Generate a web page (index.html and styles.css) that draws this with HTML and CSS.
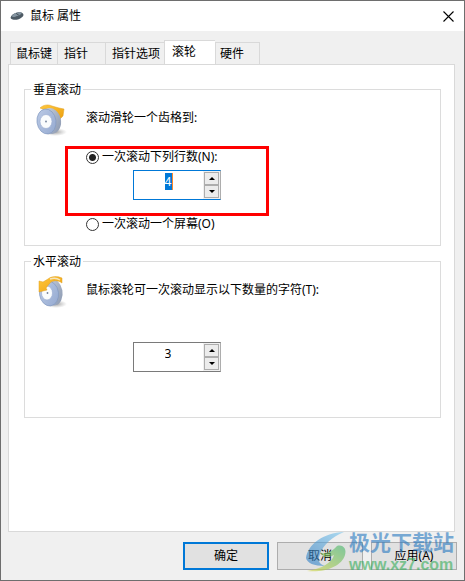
FILE: index.html
```html
<!DOCTYPE html>
<html lang="zh-CN">
<head>
<meta charset="utf-8">
<title>鼠标 属性</title>
<link rel="stylesheet" href="styles.css">
</head>
<body>
<svg class="defs" width="0" height="0" aria-hidden="true">
  <defs>
    <linearGradient id="rim" x1="0" y1="0" x2="1" y2="1"><stop offset="0" stop-color="#bccbe6"/><stop offset="1" stop-color="#94a9d0"/></linearGradient>
    <linearGradient id="tire" x1="0" y1="0" x2="1" y2="1"><stop offset="0" stop-color="#d3dae6"/><stop offset="1" stop-color="#8795ae"/></linearGradient>
    <linearGradient id="gold" x1="0" y1="0" x2="1" y2="1"><stop offset="0" stop-color="#ffc83d"/><stop offset="1" stop-color="#eda010"/></linearGradient>
    <radialGradient id="shade"><stop offset="0" stop-color="#777" stop-opacity=".7"/><stop offset="1" stop-color="#999" stop-opacity="0"/></radialGradient>
    <linearGradient id="sky" x1="0" y1="1" x2="1" y2="0"><stop offset="0" stop-color="#2779c4"/><stop offset="1" stop-color="#7cc8ee"/></linearGradient>
    <linearGradient id="leaf" x1="0" y1="1" x2="1" y2="0"><stop offset="0" stop-color="#d9d640"/><stop offset="1" stop-color="#3db56b"/></linearGradient>
  </defs>
</svg>
<main class="window">
  <header class="titlebar">
    <svg class="mouse" viewBox="0 0 16 10" aria-hidden="true">
      <path d="M1 6C2 3 8 0 13 1c3 1 3 4 1 5-3 3-8 4-11 3C1 8 0 7 1 6z" fill="#4d5a64"/>
      <path d="M2 5c2-3 7-5 11-4 1 1-1 3-5 4-2 1-5 2-6 0z" fill="#8494a0"/>
      <path d="M7 2l3 2" stroke="#354048" stroke-width="1"/>
    </svg>
    <h1>鼠标 属性</h1>
    <button class="close" aria-label="关闭"><svg viewBox="0 0 11 11" aria-hidden="true"><path d="M.5.5l10 10M10.500.5l-10 10" stroke="#000" stroke-width="1.100"/></svg></button>
  </header>
  <div class="body">
    <nav class="tabs" role="tablist">
      <button class="tab first" role="tab">鼠标键</button>
      <button class="tab" role="tab">指针</button>
      <button class="tab wide" role="tab">指针选项</button>
      <button class="tab selected" role="tab" aria-selected="true">滚轮</button>
      <button class="tab last" role="tab">硬件</button>
    </nav>
    <section class="panel" role="tabpanel">
      <section class="group">
        <h2>垂直滚动</h2>
        <svg class="wheel" viewBox="0 0 32 34" aria-hidden="true">
          <ellipse cx="19" cy="28" rx="12" ry="4" fill="url(#shade)"/>
          <path d="M4 4c3-3 8-4 12-2l7 2 5 1-1 7-3 3-7-6z" fill="url(#gold)" stroke="#e1a022" stroke-width=".5"/>
          <ellipse cx="14.500" cy="17" rx="10.500" ry="13" transform="rotate(-12 14.500 17)" fill="url(#tire)"/>
          <ellipse cx="10.500" cy="17.500" rx="9.500" ry="12.500" transform="rotate(-8 10.500 17.500)" fill="url(#rim)" stroke="#8299c0" stroke-width=".7"/>
          <ellipse cx="10" cy="17.500" rx="6" ry="7" fill="#fafcfd" stroke="#9dafd2" stroke-width=".7"/>
          <circle cx="10" cy="17.500" r=".9" fill="#71809a"/>
        </svg>
        <p>滚动滑轮一个齿格到:</p>
        <div class="choices">
          <div class="highlight">
            <label class="choice"><input type="radio" name="scroll" checked>一次滚动下列行数(N):</label>
            <div class="spin active">
              <div class="field"><input class="value" type="text" value="4" aria-label="行数"></div>
              <div class="steps"><button aria-label="增加行数"><i class="up"></i></button><button aria-label="减少行数"><i class="down"></i></button></div>
            </div>
          </div>
          <label class="choice second"><input type="radio" name="scroll">一次滚动一个屏幕(O)</label>
        </div>
      </section>
      <section class="group">
        <h2>水平滚动</h2>
        <svg class="wheel" viewBox="0 0 32 34" aria-hidden="true">
          <ellipse cx="20" cy="28" rx="11" ry="4" fill="url(#shade)"/>
          <ellipse cx="17" cy="16" rx="9.500" ry="13.500" transform="rotate(-10 17 16)" fill="url(#tire)"/>
          <ellipse cx="13" cy="17.500" rx="9.500" ry="12.500" transform="rotate(-8 13 17.500)" fill="url(#rim)" stroke="#8299c0" stroke-width=".7"/>
          <ellipse cx="11" cy="17" rx="5.500" ry="7" fill="#fafcfd" stroke="#9dafd2" stroke-width=".7"/>
          <circle cx="11.500" cy="17" r=".9" fill="#71809a"/>
          <path d="M12 3c4-3 9-3 14-1v5c-4-3-9-3-12 0l-4 5 1 2-8 2V5l4 1z" fill="url(#gold)" stroke="#e1a022" stroke-width=".5"/>
          <path d="M14 3c3-1 7-1 10 1" fill="none" stroke="#f5e5bd" stroke-width="1.500"/>
        </svg>
        <p>鼠标滚轮可一次滚动显示以下数量的字符(T):</p>
        <div class="choices horizontal">
          <div class="spin">
            <div class="field"><input class="value" type="text" value="3" aria-label="字符数"></div>
            <div class="steps"><button aria-label="增加字符数"><i class="up"></i></button><button aria-label="减少字符数"><i class="down"></i></button></div>
          </div>
        </div>
      </section>
    </section>
    <footer class="actions">
      <button class="default">确定</button>
      <button>取消</button>
      <button>应用(A)</button>
      <div class="watermark">
        <svg viewBox="0 0 42 42" aria-hidden="true">
          <path d="M0 26C2 12 17 1 38 0 26 5 17 13 14 22c-3 8 0 10 5 12C8 34 1 31 0 26z" fill="url(#sky)"/>
          <path d="M14 20c4 3 12 0 17-6 6-2 10 3 8 9-3 11-20 18-38 16 14-2 25-8 27-16-5 3-12 3-14-3z" fill="url(#leaf)"/>
        </svg>
        <div><strong>极光下载站</strong><span>www.xz7.com</span></div>
      </div>
    </footer>
  </div>
</main>
</body>
</html>
```
FILE: styles.css
```css
* { box-sizing: border-box; }
body {
  margin: 0;
  background: #fff;
  color: #000;
  font: 12px/16px "Noto Sans", "Noto Sans CJK SC", sans-serif;
}
button, input { font: inherit; color: inherit; margin: 0; padding: 0; }
h1, h2, p { margin: 0; font-size: 12px; font-weight: 400; }
.defs { position: absolute; }
.window {
  display: flex;
  flex-direction: column;
  min-height: 100vh;
  border: 1px solid #6e6e6e;
  background: #f0f0f0;
}
.titlebar {
  display: flex;
  align-items: center;
  height: 30px;
  padding: 0 10px 0 9px;
  background: #fff;
}
.mouse { width: 14px; height: 10px; }
.titlebar h1 { flex: 1; margin-left: 6px; }
.close { width: 11px; height: 11px; border: 0; background: none; }
.close svg { display: block; width: 11px; height: 11px; }
.body {
  display: flex;
  flex: 1;
  flex-direction: column;
  padding: 9px 9px 10px 7px;
}
.tabs {
  display: flex;
  align-items: flex-end;
  height: 25px;
  padding-left: 2px;
  margin-bottom: -1px;
}
.tab {
  width: 48px;
  height: 23px;
  border: 1px solid #d9d9d9;
  border-right: 0;
  background: #f0f0f0;
  text-align: left;
  padding-left: 6px;
  white-space: nowrap;
}
.tab.first { width: 47px; padding-left: 5px; }
.tab.wide { width: 59px; }
.tab.selected {
  width: 51px;
  height: 25px;
  padding: 0 0 3px 7px;
  border-bottom: 0;
  background: #fff;
}
.tab.last { width: 45px; border-right: 1px solid #d9d9d9; padding-left: 4px; }
.panel {
  display: flex;
  flex: 1;
  flex-direction: column;
  gap: 15px;
  padding: 24px 13px 24px 15px;
  border: 1px solid #d9d9d9;
  background: #fff;
}
.group {
  display: grid;
  grid-template-columns: 61px 1fr;
  grid-template-rows: 8px 48px 1fr;
  height: 157px;
  border: 1px solid #dcdcdc;
}
.group h2 {
  grid-column: 1 / 3;
  justify-self: start;
  height: 16px;
  margin: -8px 0 0 6px;
  padding: 0 2px;
  background: #fff;
}
.wheel { width: 32px; height: 34px; margin: 6px 0 0 11px; }
.group p { padding-top: 12px; }
.choices { grid-column: 1 / 3; padding-left: 40px; }
.highlight {
  width: 204px;
  height: 70px;
  border: 3px solid #f00;
  padding-left: 18px;
}
.choice { display: flex; align-items: center; gap: 3px; }
.choice input {
  appearance: none;
  width: 13px;
  height: 13px;
  border: 1px solid #333;
  border-radius: 50%;
  background: #fff;
}
.choice input:checked { background: radial-gradient(circle, #222 3px, #fff 4px); }
.choice.second { margin-left: 21px; }
.spin {
  display: flex;
  width: 88px;
  height: 30px;
  border: 1px solid #7a7a7a;
  border-right-color: #adadad;
}
.highlight .spin { margin: 5px 0 0 47px; }
.horizontal .spin { margin: 24px 0 0 68px; }
.spin.active { border-color: #0078d7 #adadad #0078d7 #0078d7; }
.field { flex: 1; padding-top: 2px; text-align: center; }
.value {
  display: block;
  width: 8px;
  height: 17px;
  margin: 0 auto;
  border: 0;
  outline: 0;
  background: none;
}
.active .value {
  border-right: 1px solid #ff8728;
  background: #0078d7;
  color: #fff;
}
.steps {
  display: flex;
  flex-direction: column;
  width: 17px;
  padding: 1px;
  background: #f0f0f0;
}
.steps button {
  display: flex;
  flex: 1;
  align-items: center;
  justify-content: center;
  border: 1px solid #adadad;
  background: #ececec;
}
.up, .down { border: 3px solid transparent; }
.up { border-top: 0; border-bottom-color: #000; }
.down { border-bottom: 0; border-top-color: #000; }
.actions {
  position: relative;
  display: flex;
  justify-content: flex-end;
  gap: 8px;
  padding-top: 10px;
  margin-right: -2px;
}
.actions button {
  width: 86px;
  height: 28px;
  border: 1px solid #adadad;
  background: #e1e1e1;
}
.actions .default { border: 2px solid #0078d7; }
.watermark {
  position: absolute;
  top: 0;
  right: 3px;
  display: flex;
  gap: 1px;
  opacity: .6;
  pointer-events: none;
  font-family: "Liberation Sans", "Noto Sans CJK SC", sans-serif;
}
.watermark svg { width: 42px; height: 42px; }
.watermark strong, .watermark span { display: block; white-space: nowrap; }
.watermark strong { color: #2879c0; font-size: 21px; font-weight: 700; line-height: 22px; }
.watermark span { color: #36ad59; font-size: 16px; font-weight: 700; line-height: 22px; }
```
